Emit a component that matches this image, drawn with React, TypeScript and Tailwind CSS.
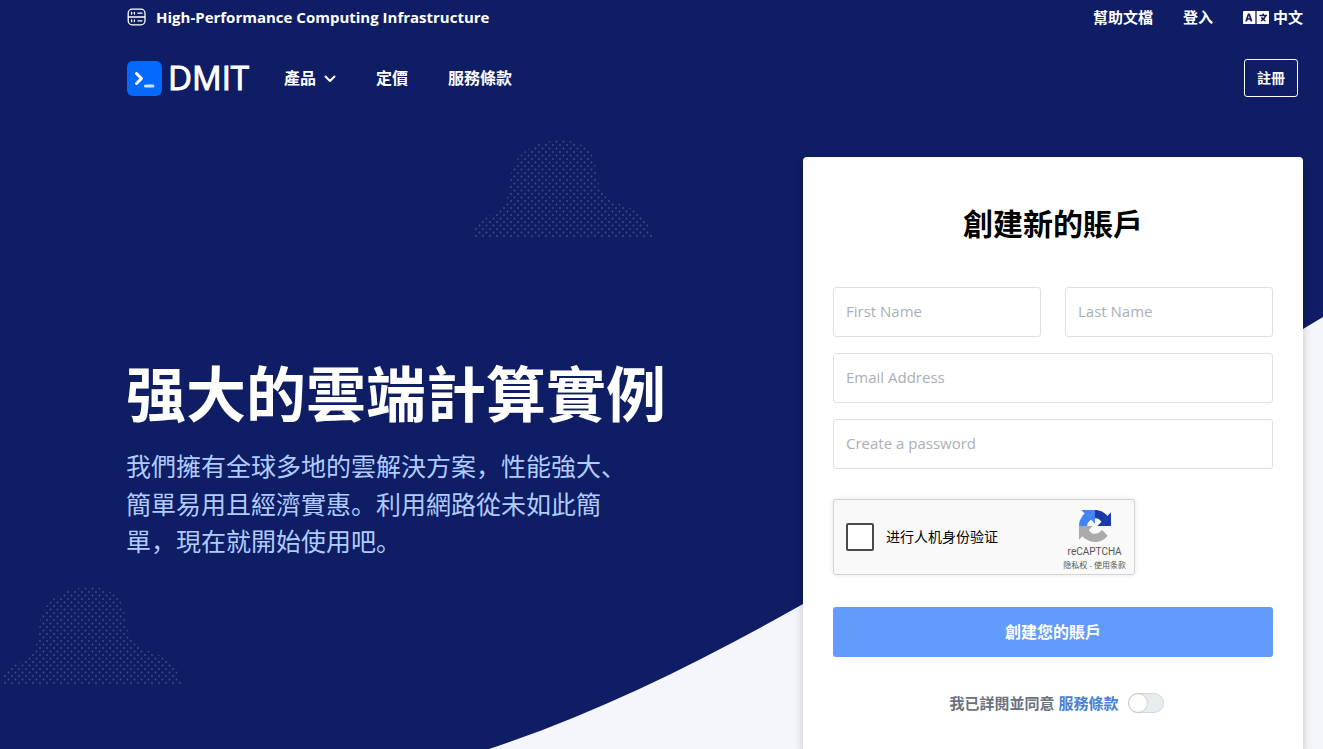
import { useId, useState } from 'react';
import { FaLanguage } from 'react-icons/fa';

const Cloud = ({ className }: { className: string }): JSX.Element => {
  const id = useId();

  return (
    <svg className={className} viewBox="0 0 182 98" aria-hidden="true">
      <defs>
        <pattern id={id} width="7" height="7" patternUnits="userSpaceOnUse">
          <circle cx="1.5" cy="1.5" r="0.9" fill="#fff" fillOpacity="0.21" />
          <circle cx="5" cy="5" r="0.9" fill="#fff" fillOpacity="0.21" />
        </pattern>
      </defs>
      <path
        fill={`url(#${id})`}
        d="M0 98 C4 88 6 80 14 78 C30 71 38 60 39 46 C39 22 52 5 80 1 C102 -2 118 4 124 22 C126 40 128 56 145 63 C166 69 176 76 182 98 Z"
      />
    </svg>
  );
};

const Backdrop = (): JSX.Element => (
  <div className="absolute inset-0 overflow-hidden" aria-hidden="true">
    <svg
      className="h-full w-full"
      viewBox="0 0 1323 749"
      preserveAspectRatio="none"
    >
      <path
        fill="#f4f6fb"
        d="M489 749 C600 712 700 662 803 604 C960 515 1150 425 1303 329 L1323 317 V749 Z"
      />
    </svg>
    <Cloud className="absolute top-[140px] left-[471px] w-[182px]" />
    <Cloud className="absolute top-[587px] left-0 w-[182px]" />
  </div>
);

const ServerIcon = (): JSX.Element => (
  <svg
    className="h-[18px] w-[20px]"
    viewBox="0 0 20 18"
    fill="none"
    stroke="currentColor"
    strokeWidth="1.3"
    strokeLinecap="round"
    aria-hidden="true"
  >
    <rect x="2.2" y="1.2" width="16.8" height="15.6" rx="4" />
    <path d="M2.5 9h16.2M5.6 4.3v1.8M8.4 4.3v1.8M12 5.2h4M5.6 11.8v1.8M8.4 11.8v1.8M12 12.8h4" />
  </svg>
);

const Logo = (): JSX.Element => (
  <a href="#" className="flex items-center gap-[6px]">
    <svg className="ml-px h-[35px] w-[35px]" viewBox="0 0 35 35" aria-hidden="true">
      <rect width="35" height="35" rx="6" fill="#0369ff" />
      <g fill="none" strokeWidth="3" strokeLinecap="round" strokeLinejoin="round">
        <path stroke="#fff" d="M9.5 12.5l5 5-5 5" />
        <path stroke="#cfe1ff" d="M18.5 25h7.5" />
      </g>
    </svg>
    <span className="font-['Open_Sans',sans-serif] text-[33px] leading-9 font-normal [-webkit-text-stroke:1px_white]">
      DMIT
    </span>
  </a>
);

const RecaptchaLogo = (): JSX.Element => (
  <svg className="h-8 w-8" viewBox="0 0 64 64" aria-hidden="true">
    <path
      fill="#1c3aa9"
      d="M64 31.955l-.033-1.37V4.687l-7.16 7.16C50.948 4.674 42.033.093 32.05.093c-10.4 0-19.622 4.96-25.458 12.64l11.736 11.86a15.55 15.55 0 0 1 4.754-5.334c2.05-1.6 4.952-2.906 8.968-2.906.485 0 .86.057 1.135.163 4.976.393 9.288 3.14 11.828 7.124l-8.307 8.307L64 31.953"
    />
    <path
      fill="#4285f4"
      d="M31.862.094l-1.37.033H4.594l7.16 7.16C4.58 13.147 0 22.06 0 32.046c0 10.4 4.96 19.622 12.64 25.458L24.5 45.768a15.55 15.55 0 0 1-5.334-4.754c-1.6-2.05-2.906-4.952-2.906-8.968 0-.485.057-.86.163-1.135.393-4.976 3.14-9.288 7.124-11.828l8.307 8.307L31.86.095"
    />
    <path
      fill="#ababab"
      d="M.001 32.045l.033 1.37v25.898l7.16-7.16c5.86 7.173 14.774 11.754 24.76 11.754 10.4 0 19.622-4.96 25.458-12.64l-11.736-11.86a15.55 15.55 0 0 1-4.754 5.334c-2.05 1.6-4.952 2.906-8.968 2.906-.485 0-.86-.057-1.135-.163-4.976-.393-9.288-3.14-11.828-7.124l8.307-8.307c-10.522.04-22.4.066-27.295-.005"
    />
  </svg>
);

const TopBar = (): JSX.Element => (
  <div className="flex h-[34px] items-center justify-between text-[15px] font-bold">
    <div className="flex items-center gap-[10px]">
      <ServerIcon />
      <span>High-Performance Computing Infrastructure</span>
    </div>
    <div className="flex items-center gap-[30px]">
      <a href="#">幫助文檔</a>
      <a href="#">登入</a>
      <button type="button" className="flex items-center gap-1">
        <FaLanguage className="h-[21px] w-[26px]" />
        中文
      </button>
    </div>
  </div>
);

const NavBar = (): JSX.Element => (
  <header className="flex h-[88px] items-center justify-between pr-[5px] font-bold">
    <div className="flex items-center gap-[35px]">
      <Logo />
      <nav className="flex items-center">
        <button type="button" className="mr-10 flex items-center gap-2">
          產品
          <svg
            className="h-3 w-3"
            viewBox="0 0 12 12"
            fill="none"
            stroke="currentColor"
            strokeWidth="2"
            strokeLinecap="round"
            strokeLinejoin="round"
            aria-hidden="true"
          >
            <path d="M1.5 4.5L6 9l4.5-4.5" />
          </svg>
        </button>
        <a href="#" className="mr-10">
          定價
        </a>
        <a href="#">服務條款</a>
      </nav>
    </div>
    <a
      href="#"
      className="flex h-[38px] items-center rounded-[3px] border border-white px-3 text-sm"
    >
      註冊
    </a>
  </header>
);

interface FieldProps {
  label: string;
  name: string;
  type?: string;
}

const Field = ({ label, name, type = 'text' }: FieldProps): JSX.Element => (
  <input
    type={type}
    name={name}
    aria-label={label}
    placeholder={label}
    className="h-[50px] w-full min-w-0 rounded-[3px] border border-[#dee0e4] bg-white px-3 pb-[2px] text-[15px] text-gray-800 placeholder:text-[#a9afb8]"
  />
);

const Recaptcha = (): JSX.Element => (
  <div className="mt-[30px] flex h-[76px] w-[302px] items-center rounded-[3px] border border-[#d3d3d3] bg-[#f9f9f9] pr-2 pl-3 text-black shadow-[0_0_4px_1px_rgba(0,0,0,0.08)]">
    <label className="flex items-center gap-3 text-sm">
      <input
        type="checkbox"
        name="captcha"
        className="h-7 w-7 appearance-none rounded-[2px] border-2 border-[#4a4a4a] bg-white checked:bg-[#4285f4]"
      />
      进行人机身份验证
    </label>
    <div className="ml-auto flex flex-col items-center pt-[6px] text-[#555]">
      <RecaptchaLogo />
      <span className="mt-[3px] font-['Roboto',sans-serif] text-[10px] leading-[14px]">
        reCAPTCHA
      </span>
      <span className="text-[8px] leading-3">
        <a href="#">隐私权</a> - <a href="#">使用条款</a>
      </span>
    </div>
  </div>
);

const SignUpCard = (): JSX.Element => {
  const [agreed, setAgreed] = useState(false);

  return (
    <form
      className="self-stretch rounded-t-[4px] bg-white px-[30px] pt-11 pb-6 shadow-[0_5px_10px_rgba(0,0,0,0.2)]"
      onSubmit={(e) => e.preventDefault()}
    >
      <h2 className="mb-[41px] text-center text-[30px] leading-[45px] font-bold text-black">
        創建新的賬戶
      </h2>
      <div className="flex flex-col gap-4">
        <div className="grid grid-cols-2 gap-6">
          <Field label="First Name" name="firstname" />
          <Field label="Last Name" name="lastname" />
        </div>
        <Field label="Email Address" name="email" type="email" />
        <Field label="Create a password" name="password" type="password" />
      </div>
      <Recaptcha />
      <button
        type="submit"
        className="mt-8 h-[50px] w-full rounded-[3px] bg-[#629bfb] text-base font-bold text-white"
      >
        創建您的賬戶
      </button>
      <div className="mt-[34px] flex items-center justify-center gap-[10px] pl-2 text-[15px] leading-6 font-bold text-[#6b7280]">
        <label htmlFor="agree">
          我已詳閱並同意{' '}
          <a href="#" className="text-[#4a80d0]">
            服務條款
          </a>
        </label>
        <input
          id="agree"
          type="checkbox"
          role="switch"
          checked={agreed}
          onChange={(e) => setAgreed(e.target.checked)}
          className="h-5 w-9 appearance-none rounded-full border border-[#d3d6da] bg-[#e9ecef] before:block before:h-[18px] before:w-[18px] before:rounded-full before:bg-white before:shadow-[0_0_2px_rgba(0,0,0,0.3)] checked:bg-[#629bfb] checked:before:ml-4"
        />
      </div>
    </form>
  );
};

const App = (): JSX.Element => (
  <div className="relative flex min-h-screen flex-col bg-[#0e1d64] font-['Open_Sans','Noto_Sans_CJK_SC',sans-serif] text-white">
    <Backdrop />
    <div className="relative flex grow flex-col pr-5 pl-[126px]">
      <TopBar />
      <NavBar />
      <main className="grid grow grid-cols-[1fr_500px] items-center pt-[35px]">
        <section className="pt-3">
          <h1 className="text-[60px] leading-[75px] font-bold">
            强大的雲端計算實例
          </h1>
          <p className="mt-4 max-w-[510px] text-[25px] leading-normal text-[#b0ccff]">
            我們擁有全球多地的雲解決方案，性能強大、簡單易用且經濟實惠。利用網路從未如此簡單，現在就開始使用吧。
          </p>
        </section>
        <SignUpCard />
      </main>
    </div>
  </div>
);

export default App;
